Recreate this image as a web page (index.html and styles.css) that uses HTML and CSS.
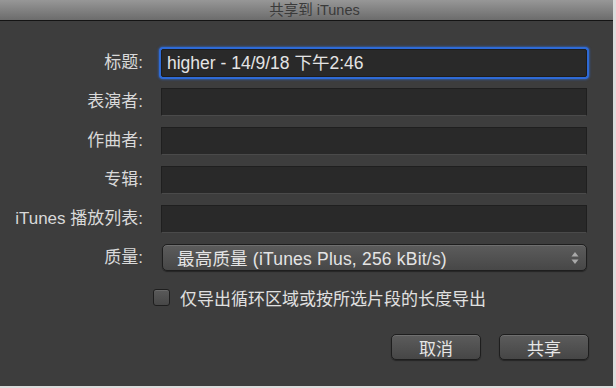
FILE: index.html
```html
<!DOCTYPE html>
<html lang="zh-CN">
<head>
    <meta charset="UTF-8">
    <title>共享到 iTunes</title>
    <link rel="stylesheet" href="styles.css">
</head>
<body>
    <div class="dialog">
        <div class="titlebar">共享到 iTunes</div>

        <div class="content">
            <div class="form">
                <label class="label">标题:</label>
                <div class="field focused">higher - 14/9/18 下午2:46</div>

                <label class="label">表演者:</label>
                <div class="field"></div>

                <label class="label">作曲者:</label>
                <div class="field"></div>

                <label class="label">专辑:</label>
                <div class="field"></div>

                <label class="label">iTunes 播放列表:</label>
                <div class="field"></div>

                <label class="label">质量:</label>
                <div class="popup">
                    <span>最高质量 (iTunes Plus, 256 kBit/s)</span>
                    <svg class="arrows" width="8" height="14" viewBox="0 0 8 14">
                        <path d="M4 1 L7.5 5.5 L0.5 5.5 Z" fill="#a9a9a9"/>
                        <path d="M4 13 L7.5 8.5 L0.5 8.5 Z" fill="#a9a9a9"/>
                    </svg>
                </div>
            </div>

            <div class="option">
                <span class="checkbox"></span>
                <span>仅导出循环区域或按所选片段的长度导出</span>
            </div>

            <div class="buttons">
                <button class="btn">取消</button>
                <button class="btn">共享</button>
            </div>
        </div>
    </div>
</body>
</html>
```

FILE: styles.css
```css
body {
    margin: 0;
    background-color: #dcdcdc;
    font-family: "Liberation Sans", "Noto Sans CJK SC", sans-serif;
    color: #dedede;
}
.dialog {
    width: 613px;
    height: 386px;
    background-color: #3d3d3d;
    overflow: hidden;
}
.titlebar {
    height: 20px;
    line-height: 20px;
    text-align: center;
    padding-left: 16px;
    font-size: 14.5px;
    color: #3a3a3a;
    background: linear-gradient(#979797, #6c6c6c);
    border-bottom: 1px solid #141414;
}
.content {
    padding-top: 28px;
}
.form {
    display: grid;
    grid-template-columns: 143px 426px;
    column-gap: 18px;
    row-gap: 11px;
}
.label {
    text-align: right;
    font-size: 17px;
    line-height: 28px;
    color: #d9d9d9;
}
.field {
    height: 26px;
    background-color: #292929;
    border: 1px solid #1f1f1f;
    border-bottom-color: #4a4a4a;
    font-size: 17.5px;
    line-height: 26px;
    padding-left: 5px;
    color: #e4e4e4;
}
.field.focused {
    border-color: #1d1d1d;
    box-shadow: 0 0 0 2px #2e6ad6, 0 0 2px 3px rgba(46, 106, 214, 0.5);
    border-radius: 2px;
}
.popup {
    height: 25px;
    margin-left: 1px;
    display: flex;
    align-items: center;
    justify-content: space-between;
    padding: 0 7px 0 14px;
    border: 1px solid #1e1e1e;
    border-radius: 5px;
    background: linear-gradient(#5c5c5c, #474747);
    box-shadow: inset 0 1px 0 rgba(255, 255, 255, 0.12), 0 1px 1px rgba(0, 0, 0, 0.4);
    font-size: 17.5px;
    letter-spacing: 0.2px;
    color: #e4e4e4;
}
.option {
    display: flex;
    align-items: center;
    gap: 10px;
    height: 24px;
    margin: 13px 0 0 153px;
    font-size: 17px;
    color: #e0e0e0;
}
.checkbox {
    width: 15px;
    height: 15px;
    border: 1px solid #1e1e1e;
    border-radius: 3px;
    background: linear-gradient(#5a5a5a, #474747);
    box-shadow: inset 0 1px 0 rgba(255, 255, 255, 0.1);
}
.buttons {
    display: flex;
    justify-content: flex-end;
    gap: 18px;
    margin: 25px 24px 0 0;
}
.btn {
    width: 90px;
    height: 26px;
    border: 1px solid #1e1e1e;
    border-radius: 5px;
    background: linear-gradient(#5c5c5c, #464646);
    box-shadow: inset 0 1px 0 rgba(255, 255, 255, 0.12), 0 1px 1px rgba(0, 0, 0, 0.4);
    font-family: "Liberation Sans", "Noto Sans CJK SC", sans-serif;
    font-size: 17px;
    color: #e6e6e6;
    padding: 0;
}
```
